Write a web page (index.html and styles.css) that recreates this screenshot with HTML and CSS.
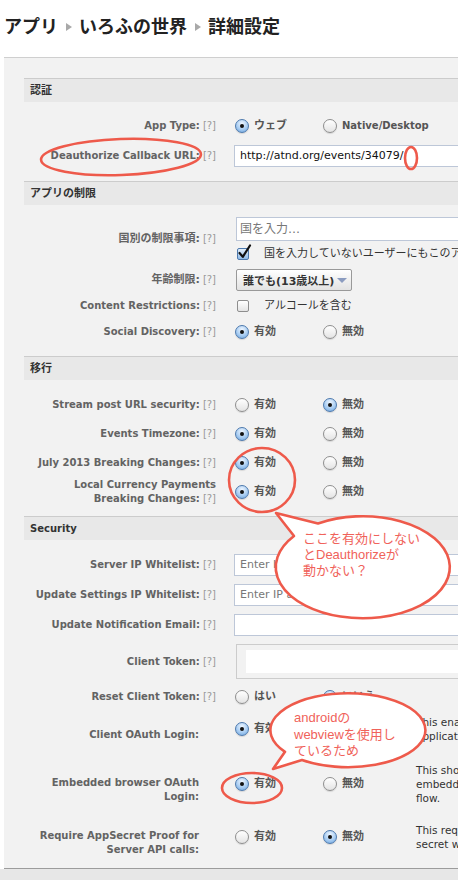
FILE: index.html
```html
<!DOCTYPE html>
<html lang="ja">
<head>
<meta charset="utf-8">
<title>詳細設定</title>
<link rel="stylesheet" href="styles.css">
</head>
<body>
<nav class="crumbs">
  <span>アプリ</span><i class="sep"></i><span>いろふの世界</span><i class="sep"></i><span>詳細設定</span>
</nav>

<main class="panel">
  <section class="group s1">
    <h2 class="group-title ja">認証</h2>
    <div class="group-body">
      <div class="row">
        <div class="label">App Type:<span class="help">[?]</span></div>
        <div class="control">
          <div class="opts">
            <div class="opt"><span class="radio on"></span><span class="ja">ウェブ</span></div>
            <div class="opt"><span class="radio"></span>Native/Desktop</div>
          </div>
        </div>
      </div>
      <div class="row">
        <div class="label">Deauthorize Callback URL:<span class="help">[?]</span></div>
        <div class="control">
          <div class="field">http://atnd.org/events/34079/</div>
        </div>
      </div>
    </div>
  </section>

  <section class="group s2">
    <h2 class="group-title ja">アプリの制限</h2>
    <div class="group-body">
      <div class="row row-country">
        <div class="label"><span class="ja">国別の制限事項:</span><span class="help">[?]</span></div>
        <div class="control stack">
          <div class="field tall placeholder"><span class="ja12">国を入力…</span></div>
          <div class="check-line">
            <span class="checkbox on"><svg width="15" height="16" viewBox="0 0 15 16"><path d="M2.5 9 L5.8 12.8 L13 1.5" fill="none" stroke="#111" stroke-width="2.2" stroke-linecap="round" stroke-linejoin="round"/></svg></span>
            <span class="ja">国を入力していないユーザーにもこのアプリを表示する</span>
          </div>
        </div>
      </div>
      <div class="row">
        <div class="label"><span class="ja">年齢制限:</span><span class="help">[?]</span></div>
        <div class="control">
          <div class="select"><span class="ja">誰でも(13歳以上)</span><i class="caret"></i></div>
        </div>
      </div>
      <div class="row">
        <div class="label">Content Restrictions:<span class="help">[?]</span></div>
        <div class="control">
          <div class="check-line flat">
            <span class="checkbox"></span>
            <span class="ja">アルコールを含む</span>
          </div>
        </div>
      </div>
      <div class="row">
        <div class="label">Social Discovery:<span class="help">[?]</span></div>
        <div class="control">
          <div class="opts">
            <div class="opt"><span class="radio on"></span><span class="ja">有効</span></div>
            <div class="opt"><span class="radio"></span><span class="ja">無効</span></div>
          </div>
        </div>
      </div>
    </div>
  </section>

  <section class="group s3">
    <h2 class="group-title ja">移行</h2>
    <div class="group-body">
      <div class="row">
        <div class="label">Stream post URL security:<span class="help">[?]</span></div>
        <div class="control">
          <div class="opts">
            <div class="opt"><span class="radio"></span><span class="ja">有効</span></div>
            <div class="opt"><span class="radio on"></span><span class="ja">無効</span></div>
          </div>
        </div>
      </div>
      <div class="row">
        <div class="label">Events Timezone:<span class="help">[?]</span></div>
        <div class="control">
          <div class="opts">
            <div class="opt"><span class="radio on"></span><span class="ja">有効</span></div>
            <div class="opt"><span class="radio"></span><span class="ja">無効</span></div>
          </div>
        </div>
      </div>
      <div class="row">
        <div class="label">July 2013 Breaking Changes:<span class="help">[?]</span></div>
        <div class="control">
          <div class="opts">
            <div class="opt"><span class="radio on"></span><span class="ja">有効</span></div>
            <div class="opt"><span class="radio"></span><span class="ja">無効</span></div>
          </div>
        </div>
      </div>
      <div class="row">
        <div class="label">Local Currency Payments Breaking Changes:<span class="help">[?]</span></div>
        <div class="control">
          <div class="opts">
            <div class="opt"><span class="radio on"></span><span class="ja">有効</span></div>
            <div class="opt"><span class="radio"></span><span class="ja">無効</span></div>
          </div>
        </div>
      </div>
    </div>
  </section>

  <section class="group s4">
    <h2 class="group-title">Security</h2>
    <div class="group-body">
      <div class="row">
        <div class="label">Server IP Whitelist:<span class="help">[?]</span></div>
        <div class="control">
          <div class="field placeholder">Enter IP addresses</div>
        </div>
      </div>
      <div class="row">
        <div class="label">Update Settings IP Whitelist:<span class="help">[?]</span></div>
        <div class="control">
          <div class="field placeholder">Enter IP addresses</div>
        </div>
      </div>
      <div class="row">
        <div class="label">Update Notification Email:<span class="help">[?]</span></div>
        <div class="control">
          <div class="field"></div>
        </div>
      </div>
      <div class="row row-token">
        <div class="label">Client Token:<span class="help">[?]</span></div>
        <div class="control">
          <div class="token"><div class="token-field"></div></div>
        </div>
      </div>
      <div class="row">
        <div class="label">Reset Client Token:<span class="help">[?]</span></div>
        <div class="control">
          <div class="opts">
            <div class="opt"><span class="radio"></span><span class="ja">はい</span></div>
            <div class="opt"><span class="radio on"></span><span class="ja">いいえ</span></div>
          </div>
        </div>
      </div>
      <div class="row row-client">
        <div class="label nohelp low">Client OAuth Login:</div>
        <div class="control">
          <div class="opts">
            <div class="opt"><span class="radio on"></span><span class="ja">有効</span></div>
            <div class="opt"><span class="radio"></span><span class="ja">無効</span></div>
          </div>
          <p class="desc">This enables the standard OAuth client token flow for your<br>application and locks down redirect URIs.</p>
        </div>
      </div>
      <div class="row row-embed">
        <div class="label nohelp low">Embedded browser OAuth Login:</div>
        <div class="control">
          <div class="opts">
            <div class="opt"><span class="radio on"></span><span class="ja">有効</span></div>
            <div class="opt"><span class="radio"></span><span class="ja">無効</span></div>
          </div>
          <p class="desc">This should be enabled if you are using an<br>embedded browser window for the OAuth Login<br>flow.</p>
        </div>
      </div>
      <div class="row row-proof">
        <div class="label nohelp low">Require AppSecret Proof for Server API calls:</div>
        <div class="control">
          <div class="opts">
            <div class="opt"><span class="radio"></span><span class="ja">有効</span></div>
            <div class="opt"><span class="radio on"></span><span class="ja">無効</span></div>
          </div>
          <p class="desc">This requires all server API calls to use the app<br>secret with an appsecret_proof parameter.</p>
        </div>
      </div>
    </div>
  </section>
</main>
<div class="page-foot"></div>

<svg class="marks" width="458" height="880" viewBox="0 0 458 880" aria-hidden="true">
  <g class="ring">
    <ellipse cx="121" cy="157" rx="80" ry="18" transform="rotate(-2 121 157)"/>
    <ellipse cx="411" cy="158" rx="6" ry="11"/>
    <ellipse cx="262" cy="480" rx="33" ry="32"/>
    <ellipse cx="252" cy="788" rx="30" ry="15"/>
  </g>
  <path class="bubble" d="M318 523.5 L276 513 L294 536 A87 51 0 1 0 318 523.5 Z"/>
  <path class="bubble" d="M285 751.8 L273 769 L302 760 A77.5 37 0 1 0 285 751.8 Z"/>
</svg>
<div class="note note-1">ここを有効にしない<br>とDeauthorizeが<br>動かない？</div>
<div class="note note-2">androidの<br>webviewを使用し<br>ているため</div>
</body>
</html>
```

FILE: styles.css
```css
* { box-sizing: border-box; }

html, body {
  margin: 0;
  overflow: hidden;
}

body {
  width: 458px;
  height: 880px;
  position: relative;
  background: #fff;
  font-family: "DejaVu Sans", "Noto Sans CJK JP", sans-serif;
  font-size: 10px;
  color: #333;
}

/* breadcrumb */
.crumbs {
  height: 57px;
  padding: 0 0 7px 4px;
  display: flex;
  align-items: center;
  font-family: "Noto Sans CJK JP", sans-serif;
  font-size: 18px;
  font-weight: 700;
  line-height: 22px;
  color: #222;
  white-space: nowrap;
}

.sep {
  width: 0;
  height: 0;
  border-left: 6px solid #a9a9a9;
  border-top: 4px solid transparent;
  border-bottom: 4px solid transparent;
  margin: 3px 7px 0 8px;
}

/* settings panel */
.panel {
  display: block;
  margin-left: 4px;
  width: 720px;
  background: #f2f2f2;
  border-top: 1px solid #cfcfcf;
  border-bottom: 1px solid #9c9c9c;
  padding: 20px 0 0 20px;
}

.page-foot {
  height: 12px;
  background: #e7e7e7;
}

.group-title {
  margin: 0;
  height: 24px;
  border-top: 1px solid #cccccc;
  background: #e8e8e8;
  padding-left: 6px;
  font-size: 10px;
  line-height: 23px;
  font-weight: 700;
  color: #333;
}

.group-title.ja { font-size: 11px; }

.group-body { padding: 9px 0 10px; }
.s2 .group-body { padding: 10px 0 11px; }
.s3 .group-body { padding: 10px 0 10px; }
.s4 .group-body { padding: 10px 0 8px; }

.row {
  display: flex;
  align-items: center;
  min-height: 30px;
}

.s2 .row { min-height: 26px; }
.s3 .row { min-height: 29px; }

.row-country { padding: 2px 0 6px; }
.row-token { padding: 4px 0 3px; }
.row-client { padding: 3px 0 10px; }
.row-embed { padding: 10px 0 6px; }
.row-proof { padding: 6px 0 3px; }

.label {
  width: 192px;
  flex: none;
  text-align: right;
  font-weight: 700;
  color: #636363;
  line-height: 14px;
}

.label.nohelp { padding-right: 17px; }
.label.low { margin-top: 12px; }

.help {
  font-weight: 400;
  color: #999;
  margin-left: 3px;
  white-space: nowrap;
}

.ja { font-size: 11px; }
.ja12 { font-size: 12px; }

.control {
  margin-left: 18px;
  flex: 1;
  display: flex;
  align-items: center;
}

.control.stack {
  flex-direction: column;
  align-items: flex-start;
}

/* radios */
.opts {
  display: flex;
  width: 182px;
  flex: none;
}

.opt {
  width: 88px;
  flex: none;
  display: flex;
  align-items: center;
  font-weight: 700;
  color: #555;
  line-height: 14px;
  white-space: nowrap;
}

.radio {
  position: relative;
  flex: none;
  width: 14px;
  height: 14px;
  margin: 0 5px 0 1px;
  border-radius: 50%;
  border: 1px solid #8e8e8e;
  background: linear-gradient(#ffffff, #e4e4e4);
  box-shadow: 0 1px 1px rgba(0, 0, 0, 0.12);
}

.radio.on {
  border-color: #4d79ad;
  background: radial-gradient(circle at 50% 30%, #eef6ff 0%, #a9cdf2 55%, #6aa3de 100%);
}

.radio.on::after {
  content: "";
  position: absolute;
  left: 50%;
  top: 50%;
  width: 4px;
  height: 4px;
  margin: -2px 0 0 -2px;
  border-radius: 50%;
  background: #111;
}

/* text fields */
.field {
  width: 420px;
  flex: none;
  height: 22px;
  border: 1px solid #bdc7d8;
  background: #fff;
  padding: 0 5px;
  font-size: 11px;
  line-height: 20px;
  color: #111;
  white-space: nowrap;
  overflow: hidden;
}

.field.placeholder { color: #777; }

.field.tall {
  height: 24px;
  margin-left: 2px;
  padding: 0 3px;
  line-height: 22px;
}

/* checkboxes */
.check-line {
  display: flex;
  align-items: center;
  margin-top: 6px;
  line-height: 14px;
  color: #333;
  white-space: nowrap;
}

.check-line.flat { margin-top: 0; }

.checkbox {
  position: relative;
  flex: none;
  width: 12px;
  height: 12px;
  margin: 0 15px 0 3px;
  border: 1px solid #8e8e8e;
  border-radius: 2px;
  background: linear-gradient(#ffffff, #e4e4e4);
}

.checkbox.on {
  border-color: #4d79ad;
  background: linear-gradient(#e3effb, #8fbbe9);
}

.checkbox svg {
  position: absolute;
  left: -1px;
  top: -5px;
}

/* select */
.select {
  margin-left: 2px;
  width: 116px;
  height: 22px;
  display: flex;
  align-items: center;
  padding: 0 4px 0 6px;
  border: 1px solid #999;
  border-radius: 2px;
  background: linear-gradient(#ffffff, #e2e2e2);
  font-weight: 700;
  color: #333;
  white-space: nowrap;
}

.caret {
  margin-left: auto;
  width: 0;
  height: 0;
  border-top: 5px solid #8b9cc0;
  border-left: 5px solid transparent;
  border-right: 5px solid transparent;
}

/* client token */
.token {
  margin-left: 2px;
  width: 420px;
  border: 1px solid #cccccc;
  padding: 5px 9px;
}

.token-field {
  height: 23px;
  background: #fff;
}

/* descriptions */
.desc {
  margin: 0;
  font-size: 10.5px;
  line-height: 14px;
  color: #333;
  white-space: nowrap;
}

/* annotations drawn over the screenshot */
.marks {
  position: absolute;
  left: 0;
  top: 0;
  pointer-events: none;
}

.ring ellipse {
  fill: none;
  stroke: #ee5a4b;
  stroke-width: 2.6;
}

.bubble {
  fill: #fff;
  stroke: #ee5a4b;
  stroke-width: 2.6;
  stroke-linejoin: round;
}

.note {
  position: absolute;
  font-family: "Liberation Sans", "Noto Sans CJK JP", sans-serif;
  font-size: 13px;
  line-height: 16px;
  color: #f0625a;
  white-space: nowrap;
}

.note-1 { left: 303px; top: 531px; }
.note-2 { left: 294px; top: 710px; line-height: 16.5px; }
```
